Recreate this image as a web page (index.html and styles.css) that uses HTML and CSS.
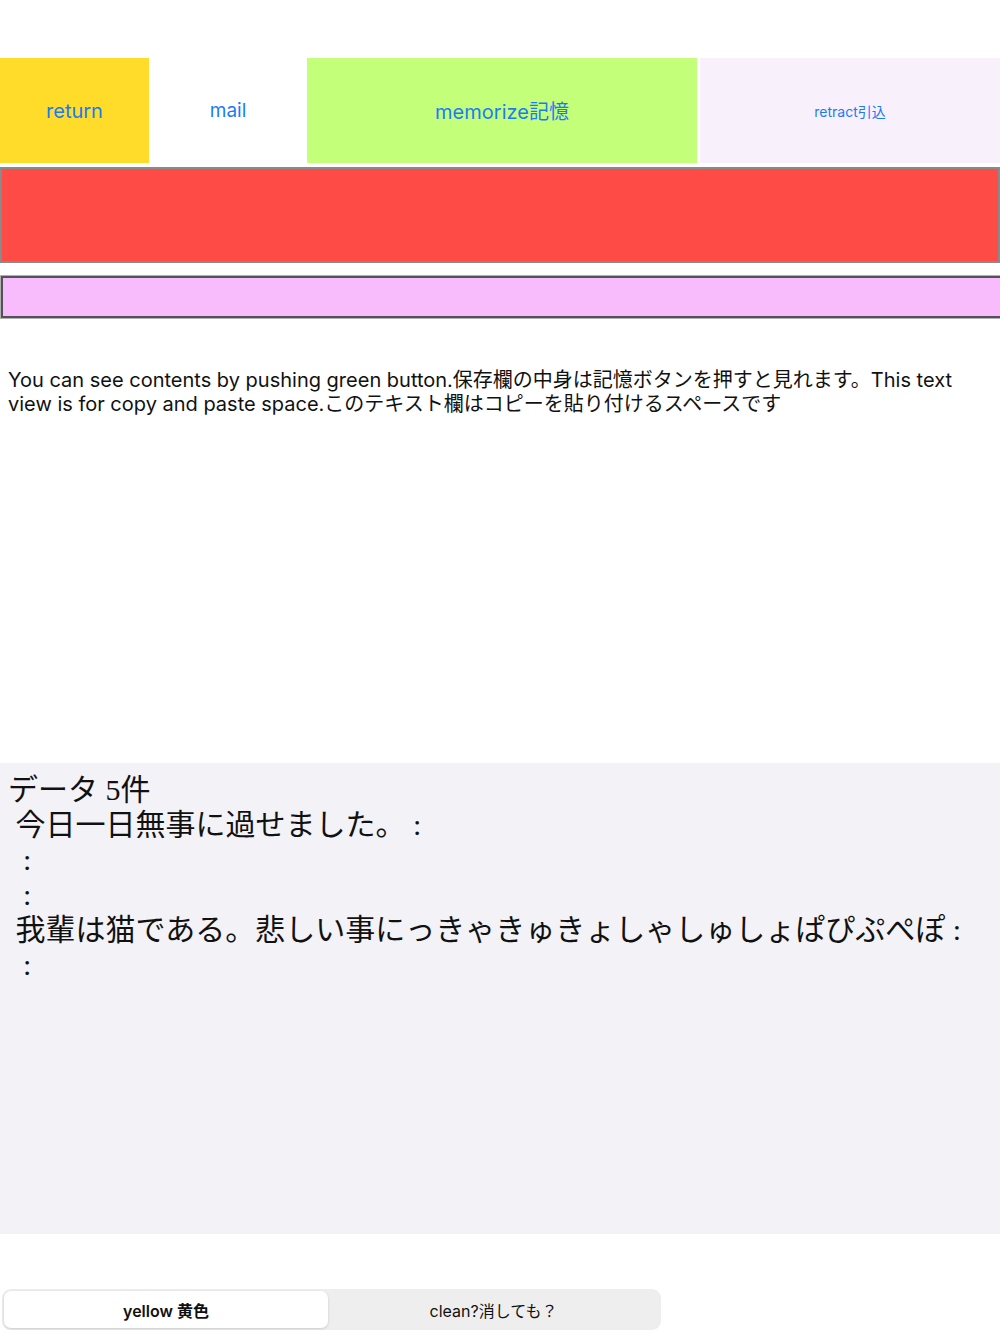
FILE: index.html
```html
<!DOCTYPE html>
<html lang="ja">
<head>
    <meta charset="UTF-8">
    <meta name="viewport" content="width=device-width, initial-scale=1.0">
    <title>memo</title>
    <link rel="stylesheet" href="styles.css">
</head>
<body>
    <div class="page">
        <!-- top buttons -->
        <div class="toolbar">
            <button class="btn btn-return">return</button>
            <button class="btn btn-mail">mail</button>
            <button class="btn btn-memorize">memorize記憶</button>
            <button class="btn btn-retract">retract引込</button>
        </div>

        <div class="red-field"></div>
        <div class="pink-field"></div>

        <p class="note">You can see contents by pushing green button.保存欄の中身は記憶ボタンを押すと見れます。This text view is for copy and paste space.このテキスト欄はコピーを貼り付けるスペースです</p>

        <div class="data-view">データ 5件
 今日一日無事に過せました。 :
  :
  :
 我輩は猫である。悲しい事にっきゃきゅきょしゃしゅしょぱぴぷぺぽ :
  :</div>

        <div class="segment">
            <button class="seg seg-on">yellow 黄色</button>
            <button class="seg">clean?消しても？</button>
        </div>
    </div>
</body>
</html>
```

FILE: styles.css
```css
body {
    margin: 0;
    background-color: white;
    font-family: Inter, "Noto Sans CJK JP", sans-serif;
    overflow-x: hidden;
}

.page {
    padding-top: 58px;
}

.toolbar {
    display: flex;
    height: 105px;
}

.btn {
    border: none;
    margin: 0;
    padding: 0;
    color: #1a7cf5;
    font-family: Inter, "Noto Sans CJK JP", sans-serif;
    font-size: 20px;
    cursor: pointer;
}

.btn-return {
    width: 149px;
    background-color: #ffdb2a;
    margin-right: 1px;
}

.btn-mail {
    width: 156px;
    background-color: white;
    font-size: 19px;
}

.btn-memorize {
    width: 390px;
    margin-left: 1px;
    background-color: #c4ff7a;
}

.btn-retract {
    flex: 1;
    margin-left: 3px;
    background-color: #f8f0fa;
    font-size: 14px;
}

.red-field {
    margin-top: 4px;
    height: 92px;
    background-color: #ff4b45;
    border: 2px solid #8a8a8a;
}

.pink-field {
    margin: 13px -8px 0 1px;
    height: 38px;
    background-color: #f8bbfc;
    border: 2px solid #55505a;
    box-shadow: 0 0 0 1px #b0b0b0;
}

.note {
    margin: 50px 8px 0;
    font-size: 20px;
    line-height: 24px;
    color: #111;
}

.data-view {
    margin-top: 347px;
    height: 471px;
    box-sizing: border-box;
    padding: 9px 8px 0;
    background-color: #f2f2f7;
    white-space: pre-wrap;
    font-family: "Liberation Serif", "Noto Sans CJK JP", serif;
    font-size: 30px;
    line-height: 35px;
    color: #111;
}

.segment {
    display: flex;
    margin: 55px 0 0 2px;
    width: 659px;
    height: 41px;
    box-sizing: border-box;
    padding: 2px;
    background-color: #eeeeef;
    border-radius: 9px;
}

.seg {
    flex: 1;
    border: none;
    background: transparent;
    border-radius: 7px;
    font-family: Inter, "Noto Sans CJK JP", sans-serif;
    font-size: 16px;
    color: #111;
}

.seg-on {
    flex: 0 0 324px;
    background-color: white;
    font-weight: 600;
    box-shadow: 0 1px 3px rgba(0, 0, 0, 0.15);
}
```
